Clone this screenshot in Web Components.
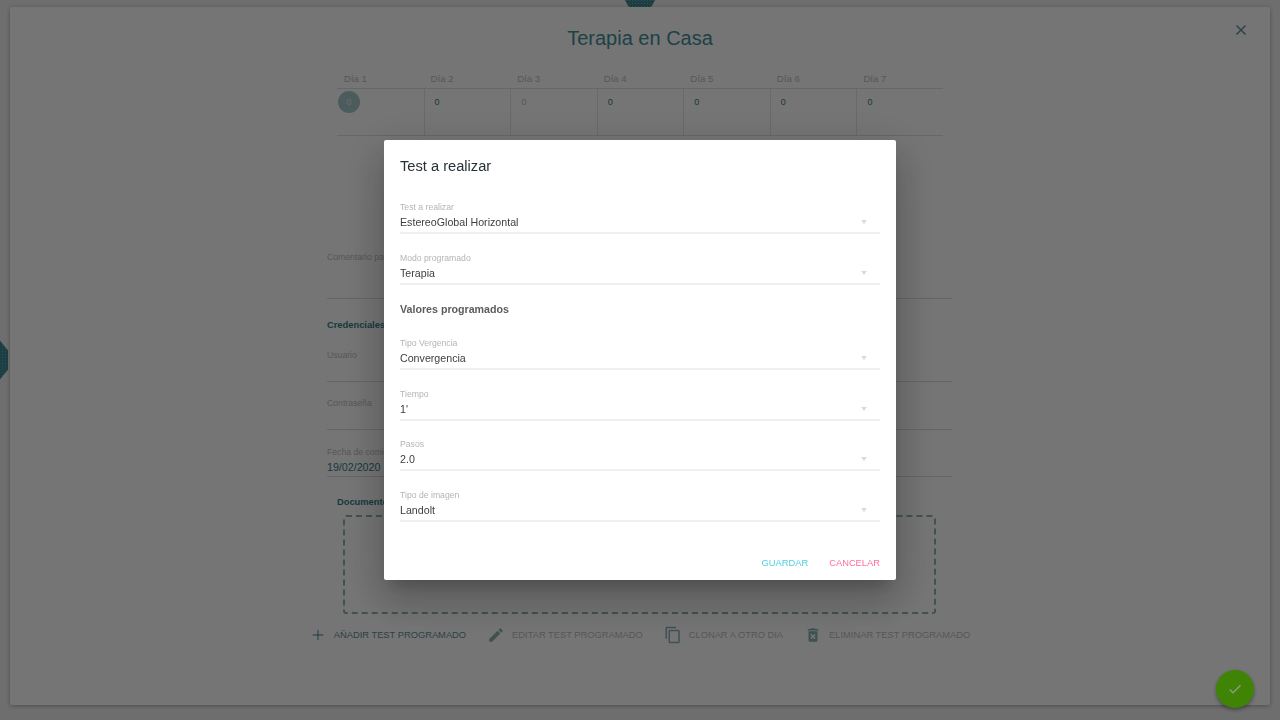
<!DOCTYPE html>
<html lang="es">
<head>
<meta charset="utf-8">
<title>Terapia en Casa</title>
<style>
  html, body { margin: 0; height: 100%; overflow: hidden; }
  body { background: #f0f0f0; font-family: "Liberation Sans", Arial, sans-serif; }
</style>
</head>
<body>
<therapy-page></therapy-page>
<test-dialog>
  <select-field label="Test a realizar" value="EstereoGlobal Horizontal"></select-field>
  <select-field label="Modo programado" value="Terapia"></select-field>
  <section-title>Valores programados</section-title>
  <select-field label="Tipo Vergencia" value="Convergencia"></select-field>
  <select-field label="Tiempo" value="1'"></select-field>
  <select-field label="Pasos" value="2.0"></select-field>
  <select-field label="Tipo de imagen" value="Landolt"></select-field>
</test-dialog>
<done-fab></done-fab>

<script>
const ICONS = {
  add: '<path d="M19 12.6h-6.4V19h-1.2v-6.4H5v-1.2h6.4V5h1.2v6.4H19v1.2z"/>',
  edit: '<path d="M3 17.25V21h3.75L17.81 9.94l-3.75-3.75L3 17.25zM20.71 7.04a1 1 0 0 0 0-1.41l-2.34-2.34a1 1 0 0 0-1.41 0l-1.83 1.83 3.75 3.75 1.83-1.83z"/>',
  copy: '<path d="M16 1H4c-1.1 0-2 .9-2 2v14h2V3h12V1zm3 4H8c-1.1 0-2 .9-2 2v14c0 1.1.9 2 2 2h11c1.1 0 2-.9 2-2V7c0-1.1-.9-2-2-2zm0 16H8V7h11v14z"/>',
  trash: '<path d="M6 19c0 1.1.9 2 2 2h8c1.1 0 2-.9 2-2V7H6v12zm2.46-7.12 1.41-1.41L12 12.59l2.12-2.12 1.41 1.41L13.41 14l2.12 2.12-1.41 1.41L12 15.41l-2.12 2.12-1.41-1.41L10.59 14l-2.13-2.12zM15.5 4l-1-1h-5l-1 1H5v2h14V4z"/>'
};

class DayTable extends HTMLElement {
  constructor() {
    super();
    const days = [1, 2, 3, 4, 5, 6, 7];
    this.attachShadow({ mode: 'open' }).innerHTML = `
      <style>
        :host { display: block; width: 606px; margin: 0 auto; }
        .row { display: grid; grid-template-columns: repeat(7, 1fr); }
        .head div { height: 16px; padding-left: 7px; font-size: 9.6px; line-height: 14px; color: #bdbdbd; }
        .body { border-top: 1px solid #e0e0e0; border-bottom: 1px solid #e0e0e0; height: 46px; }
        .body div { border-left: 1px solid #e4e4e4; padding: 8px 0 0 10px; font-size: 9px; line-height: 11px; color: #2f8089; }
        .body div:first-child { border-left: 0; padding: 2px 0 0 1px; }
        .body div:nth-child(3) { color: #b4c2c4; }
        b { display: flex; width: 22px; height: 22px; border-radius: 50%; align-items: center; justify-content: center; background: #a6c8cb; color: #e2e8e8; font-weight: 400; }
      </style>
      <div class="row head">${days.map(d => `<div>Día ${d}</div>`).join('')}</div>
      <div class="row body">${days.map(d => d == 1 ? '<div><b>0</b></div>' : '<div>0</div>').join('')}</div>`;
  }
}
customElements.define('day-table', DayTable);

class ActionButton extends HTMLElement {
  constructor() {
    super();
    const on = this.hasAttribute('active');
    this.attachShadow({ mode: 'open' }).innerHTML = `
      <style>
        :host { display: inline-flex; align-items: center; height: 24px; font-size: 9.33px; color: ${on ? '#5f8f94' : '#bdbdbd'}; white-space: nowrap; }
        svg { width: 18px; height: 18px; fill: ${on ? '#2f8089' : '#8ab0b3'}; margin: 0 7px 0 1px; flex: none; }
      </style>
      <svg viewBox="0 0 24 24">${ICONS[this.getAttribute('icon')]}</svg><slot></slot>`;
  }
}
customElements.define('action-button', ActionButton);

class TherapyPage extends HTMLElement {
  constructor() {
    super();
    this.attachShadow({ mode: 'open' }).innerHTML = `
      <style>
        :host { display: block; height: 720px; box-sizing: border-box; padding: 7px 10px 15px; position: relative; overflow: hidden; }
        .hex { position: absolute; background-color: #3f8a93; background-image: radial-gradient(circle, #66acb3 1px, transparent 1px); background-size: 3px 3px; clip-path: polygon(25% 0, 75% 0, 100% 50%, 75% 100%, 25% 100%, 0 50%); }
        .hex.top { left: 619px; top: -28px; width: 42px; height: 36px; }
        .hex.left { left: -14px; top: 341px; width: 22px; height: 38px; clip-path: polygon(30% 0, 65% 0, 100% 25%, 100% 75%, 65% 100%, 30% 100%, 0 50%); }
        .card { position: relative; height: 698px; box-sizing: border-box; background: #fff; border-radius: 2px; box-shadow: 0 1px 4px rgba(0,0,0,.3); }
        h1 { margin: 0; padding-top: 18px; height: 48px; box-sizing: border-box; text-align: center; font-size: 20px; font-weight: 400; line-height: 26px; color: #3f8f98; }
        .close { position: absolute; right: 24px; top: 18px; width: 10px; height: 10px; fill: #5a8f94; }
        .form { margin: 0 318px 0 317px; width: 625px; }
        .comment { margin-top: 115px; height: 48px; border-bottom: 1px solid #dcdcdc; font-size: 8.67px; line-height: 12px; color: #bdbdbd; box-sizing: border-box; }
        .cred { margin-top: 20px; font-size: 9.33px; font-weight: 700; line-height: 12px; color: #2f8089; }
        .line { height: 48px; box-sizing: border-box; border-bottom: 1px solid #dcdcdc; font-size: 8.67px; color: #bdbdbd; }
        .user { margin-top: 19px; height: 32px; }
        .pass { padding-top: 16px; }
        .date { padding-top: 17px; height: 47px; line-height: 11px; }
        .date span { display: block; margin-top: 2px; font-size: 10.67px; line-height: 14px; color: #2f8089; }
        .docs { margin: 19px 0 0 10px; font-size: 9.33px; font-weight: 700; line-height: 12px; color: #2f8089; }
        .drop { width: 593px; height: 99px; box-sizing: border-box; margin: 7px 0 0 16px; border: 2px dashed #8fb3b6; border-radius: 3px; }
        .actions { display: flex; justify-content: center; margin: 9px 0 0 0; gap: 20px; padding-right: 2px; }
      </style>
      <div class="hex top"></div>
      <div class="hex left"></div>
      <div class="card">
        <h1>Terapia en Casa</h1>
        <svg class="close" viewBox="0 0 14 14"><path d="M14 1.4 12.6 0 7 5.6 1.4 0 0 1.4 5.6 7 0 12.6 1.4 14 7 8.4l5.6 5.6 1.4-1.4L8.4 7z"/></svg>
        <day-table style="margin-top:17px;margin-left:327px;"></day-table>
        <div class="form">
          <div class="comment">Comentario pa</div>
          <div class="cred">Credenciales</div>
          <div class="line user">Usuario</div>
          <div class="line pass">Contraseña</div>
          <div class="line date">Fecha de comienzo<span>19/02/2020</span></div>
          <div class="docs">Documentos</div>
          <div class="drop"></div>
        </div>
        <div class="actions">
          <action-button icon="add" active>AÑADIR TEST PROGRAMADO</action-button>
          <action-button icon="edit">EDITAR TEST PROGRAMADO</action-button>
          <action-button icon="copy">CLONAR A OTRO DIA</action-button>
          <action-button icon="trash">ELIMINAR TEST PROGRAMADO</action-button>
        </div>
      </div>`;
  }
}
customElements.define('therapy-page', TherapyPage);

class SelectField extends HTMLElement {
  constructor() {
    super();
    this.attachShadow({ mode: 'open' }).innerHTML = `
      <style>
        :host { display: block; height: 50.6px; box-sizing: border-box; padding-top: 12px; }
        .wrap { position: relative; height: 30px; border-bottom: 2px solid #f0f0f0; }
        label { display: block; font-size: 8.67px; line-height: 11px; color: #b4b4b4; }
        .val { margin-top: 2px; font-size: 10.67px; line-height: 14px; color: #404040; }
        i { position: absolute; right: 13px; top: 18px; border: 3px solid transparent; border-top: 4px solid #dcdcdc; border-bottom: 0; }
      </style>
      <div class="wrap">
        <label>${this.getAttribute('label')}</label>
        <div class="val">${this.getAttribute('value')}</div>
        <i></i>
      </div>`;
  }
}
customElements.define('select-field', SelectField);

class SectionTitle extends HTMLElement {
  constructor() {
    super();
    this.attachShadow({ mode: 'open' }).innerHTML = `
      <style>
        :host { display: block; height: 35px; padding-top: 11px; box-sizing: border-box; font-size: 10.67px; font-weight: 700; line-height: 14px; color: #5c5c5c; }
      </style>
      <slot></slot>`;
  }
}
customElements.define('section-title', SectionTitle);

class TestDialog extends HTMLElement {
  constructor() {
    super();
    this.attachShadow({ mode: 'open' }).innerHTML = `
      <style>
        :host { position: fixed; inset: 0; display: flex; align-items: center; justify-content: center; background: rgba(0,0,0,.54); }
        .box { width: 512px; height: 440px; box-sizing: border-box; padding: 0 16px; background: #fff; border-radius: 2px; box-shadow: 0 11px 15px -7px rgba(0,0,0,.2), 0 24px 38px 3px rgba(0,0,0,.14), 0 9px 46px 8px rgba(0,0,0,.12); display: flex; flex-direction: column; }
        h2 { margin: 0; padding-top: 16px; height: 50px; box-sizing: border-box; font-size: 14.67px; font-weight: 400; line-height: 20px; color: #263238; }
        .foot { margin-top: auto; height: 24px; display: flex; justify-content: flex-end; gap: 21px; font-size: 9.33px; line-height: 14px; }
        .ok { color: #4dd0e1; }
        .no { color: #ff6f9f; }
      </style>
      <div class="box">
        <h2>Test a realizar</h2>
        <slot></slot>
        <div class="foot"><span class="ok">GUARDAR</span><span class="no">CANCELAR</span></div>
      </div>`;
  }
}
customElements.define('test-dialog', TestDialog);

class DoneFab extends HTMLElement {
  constructor() {
    super();
    this.attachShadow({ mode: 'open' }).innerHTML = `
      <style>
        :host { position: fixed; left: 1216px; top: 670px; width: 38px; height: 38px; border-radius: 50%; background: #3f8405; display: flex; align-items: center; justify-content: center; box-shadow: 0 2px 4px rgba(0,0,0,.35); }
        svg { width: 16px; height: 16px; fill: #8d9c88; }
      </style>
      <svg viewBox="0 0 24 24"><path d="M9 16.2 4.8 12l-1.4 1.4L9 19 21 7l-1.4-1.4z"/></svg>`;
  }
}
customElements.define('done-fab', DoneFab);
</script>
</body>
</html>
